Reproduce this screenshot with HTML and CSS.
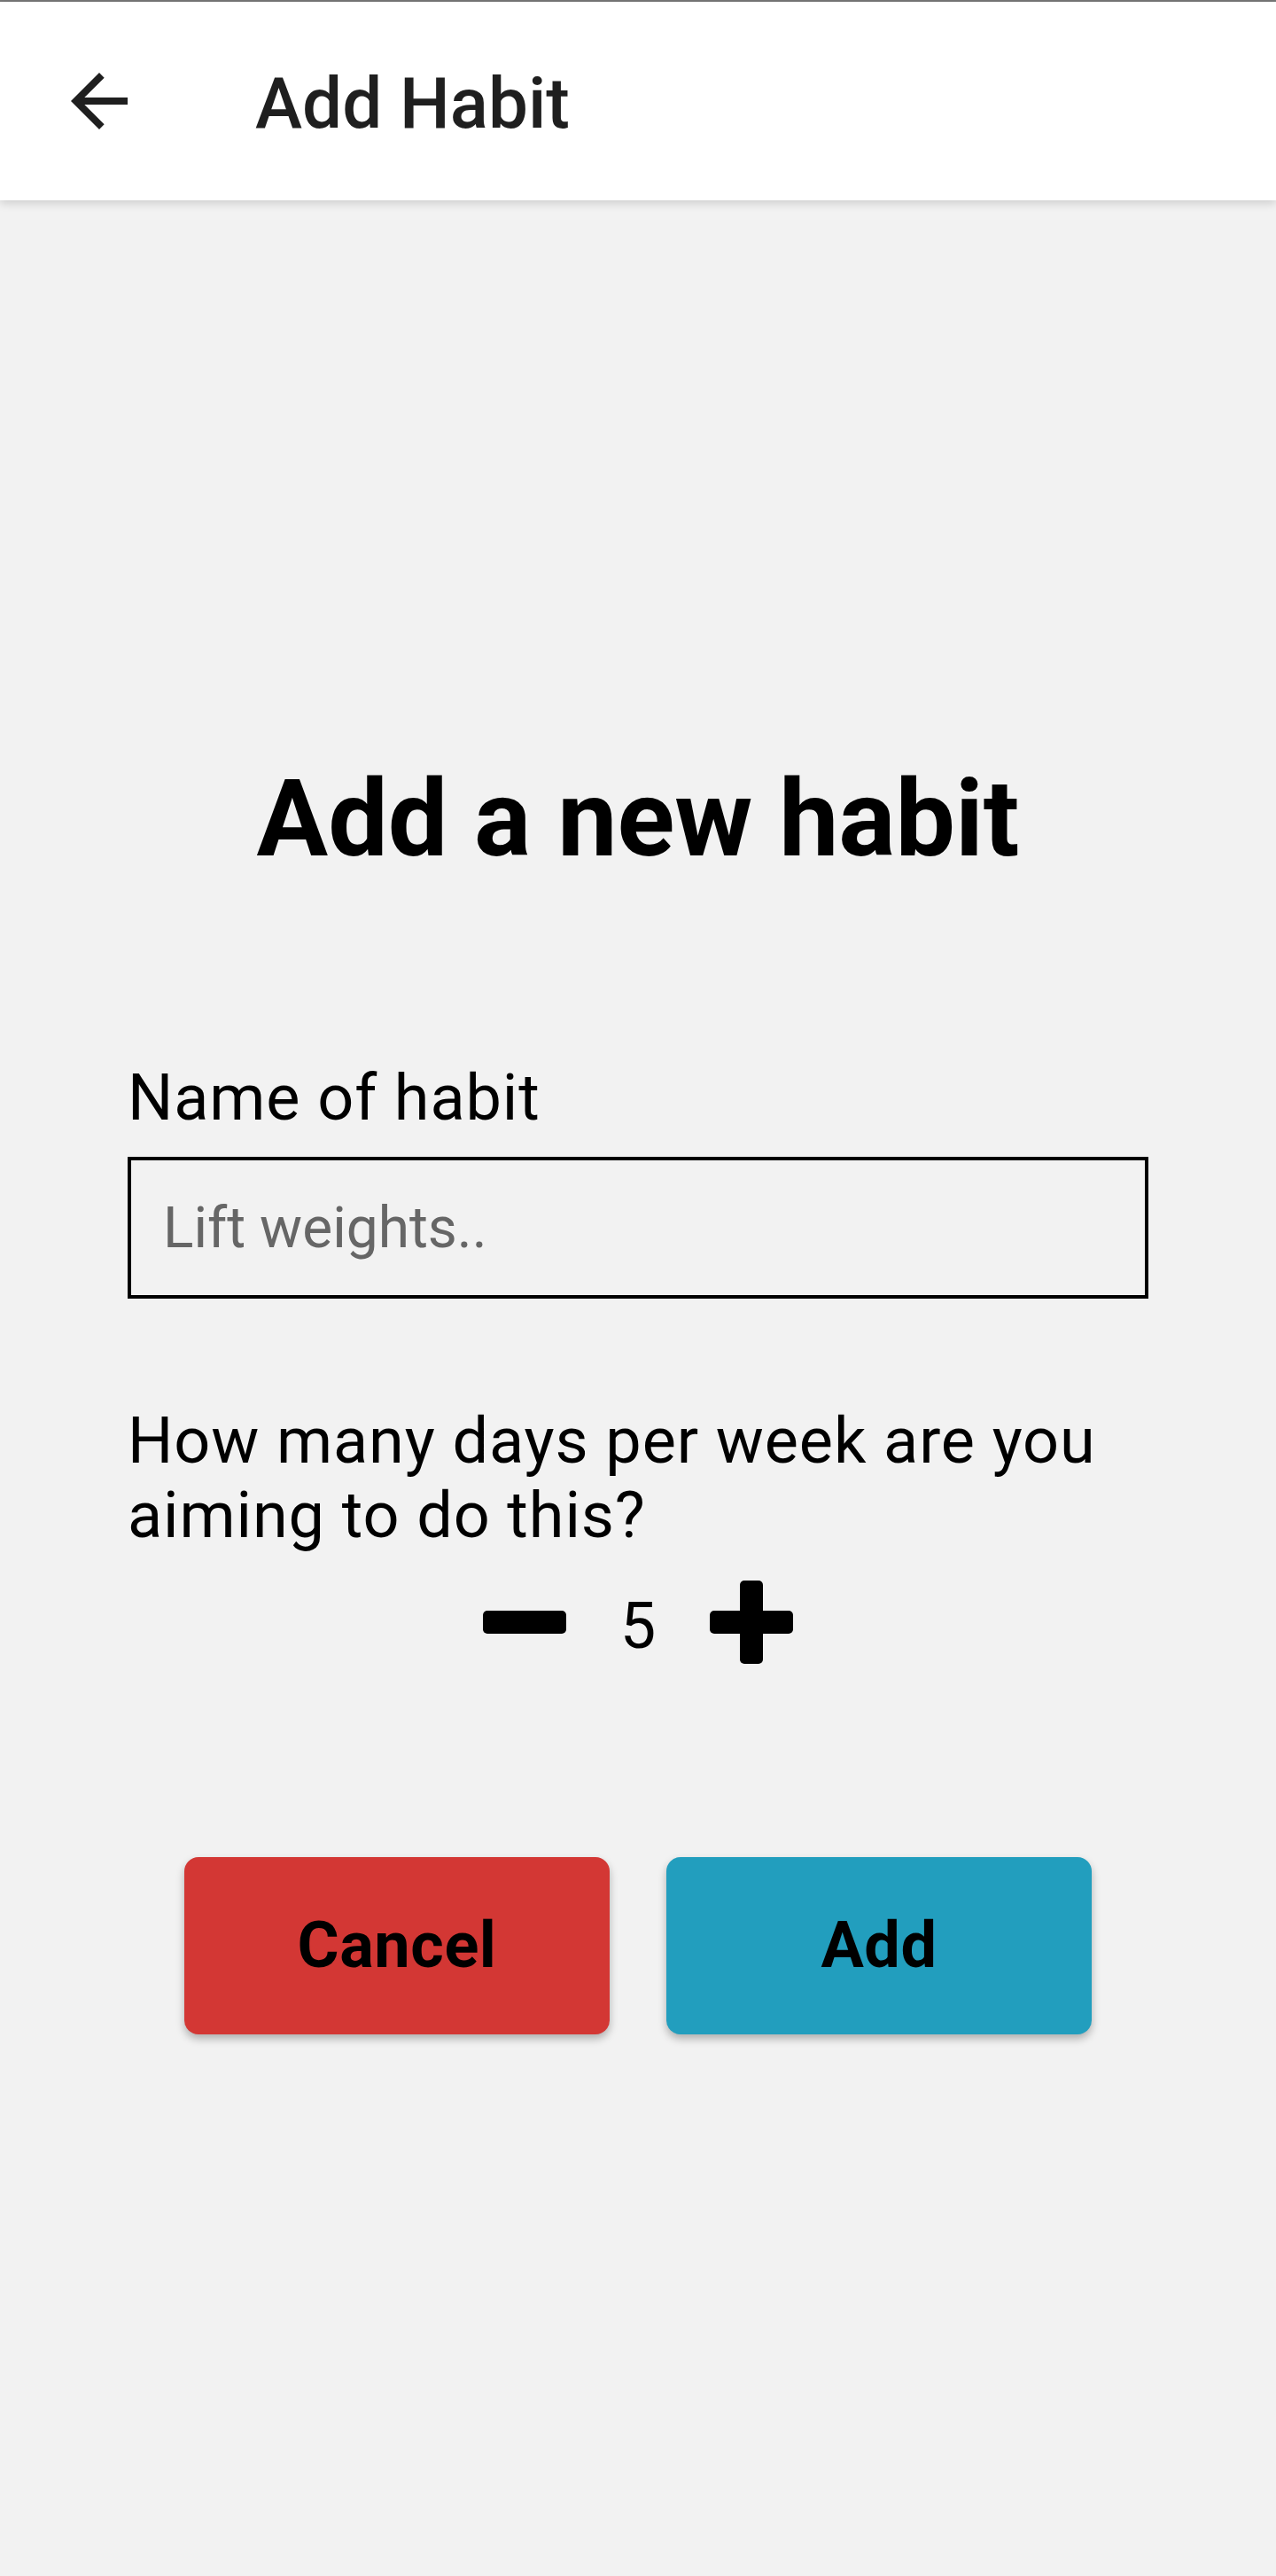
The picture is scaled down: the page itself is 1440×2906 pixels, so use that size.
FILE: index.html
```html
<!DOCTYPE html>
<html lang="en">
<head>
<meta charset="utf-8">
<title>Add Habit</title>
<link rel="stylesheet" href="styles.css">
</head>
<body>
<div class="screen">
  <header class="appbar">
    <button class="nav-btn" aria-label="Back">
      <svg viewBox="0 0 24 24" width="96" height="96"><path d="M20 11H7.83l5.59-5.59L12 4l-8 8 8 8 1.41-1.41L7.83 13H20v-2z"/></svg>
    </button>
    <h1 class="appbar-title">Add Habit</h1>
  </header>
  <main class="content">
    <h2 class="page-title">Add a new habit</h2>
    <form class="form">
      <label class="field-label" for="habit-name">Name of habit</label>
      <input class="text-input" id="habit-name" type="text" placeholder="Lift weights..">
      <p class="question">How many days per week are you aiming to do this?</p>
      <div class="stepper">
        <button type="button" class="step-btn" aria-label="Decrease">
          <svg viewBox="0 0 94 94" width="94" height="94"><rect x="0" y="34" width="94" height="26" rx="5"/></svg>
        </button>
        <span class="step-value">5</span>
        <button type="button" class="step-btn" aria-label="Increase">
          <svg viewBox="0 0 94 94" width="94" height="94"><rect x="0" y="34" width="94" height="26" rx="5"/><rect x="34" y="0" width="26" height="94" rx="5"/></svg>
        </button>
      </div>
      <div class="actions">
        <button type="button" class="btn btn-cancel">Cancel</button>
        <button type="button" class="btn btn-add">Add</button>
      </div>
    </form>
  </main>
</div>
</body>
</html>
```
FILE: styles.css
```css
* { box-sizing: border-box; }
html, body {
  margin: 0;
  padding: 0;
  background: #f2f2f2;
  font-family: Roboto, "Noto Sans", "Liberation Sans", sans-serif;
}
.screen {
  min-height: 2906px;
  border-top: 2px solid #777777;
  background: #f2f2f2;
}
.appbar {
  position: relative;
  z-index: 1;
  height: 224px;
  background: #ffffff;
  display: flex;
  align-items: center;
  box-shadow: 0 3px 10px rgba(0, 0, 0, 0.16);
}
.nav-btn {
  margin-left: 64px;
  width: 96px;
  height: 96px;
  padding: 0;
  border: 0;
  background: none;
  display: flex;
}
.nav-btn svg { fill: #1f1f1f; }
.appbar-title {
  margin: 8px 0 0 128px;
  font-size: 80px;
  font-weight: 500;
  color: #1f1f1f;
  line-height: 1.172;
}
.content {
  padding: 628px 144px 0;
}
.page-title {
  margin: 0;
  text-align: center;
  font-size: 120px;
  font-weight: 700;
  color: #000;
  line-height: 1.172;
}
.form {
  display: flex;
  flex-direction: column;
  margin-top: 202px;
}
.field-label {
  font-size: 72px;
  letter-spacing: 0.9px;
  line-height: 1.172;
  color: #000;
}
.text-input {
  margin-top: 24px;
  height: 160px;
  width: 100%;
  border: 4px solid #000;
  background: transparent;
  padding: 0 36px;
  font-family: inherit;
  font-size: 64px;
  color: #000;
  outline: none;
}
.text-input::placeholder { color: #666666; }
.question {
  margin: 119px 0 0;
  font-size: 72px;
  letter-spacing: 0.9px;
  line-height: 1.172;
  color: #000;
}
.stepper {
  margin-top: 30px;
  display: flex;
  justify-content: center;
  align-items: center;
  height: 94px;
}
.step-btn {
  width: 94px;
  height: 94px;
  padding: 0;
  border: 0;
  background: none;
  display: flex;
}
.step-btn svg { fill: #000; }
.step-value {
  width: 162px;
  text-align: center;
  font-size: 72px;
  line-height: 1;
  color: #000;
  margin-top: 10px;
}
.actions {
  margin-top: 218px;
  display: flex;
  justify-content: center;
  gap: 64px;
}
.btn {
  width: 480px;
  height: 200px;
  border: 0;
  border-radius: 16px;
  font-family: inherit;
  font-size: 72px;
  font-weight: 700;
  letter-spacing: 0.6px;
  color: #000;
  box-shadow: 0 5px 10px rgba(0, 0, 0, 0.28);
}
.btn-cancel { background: #d33734; }
.btn-add { background: #229ebe; }
```
